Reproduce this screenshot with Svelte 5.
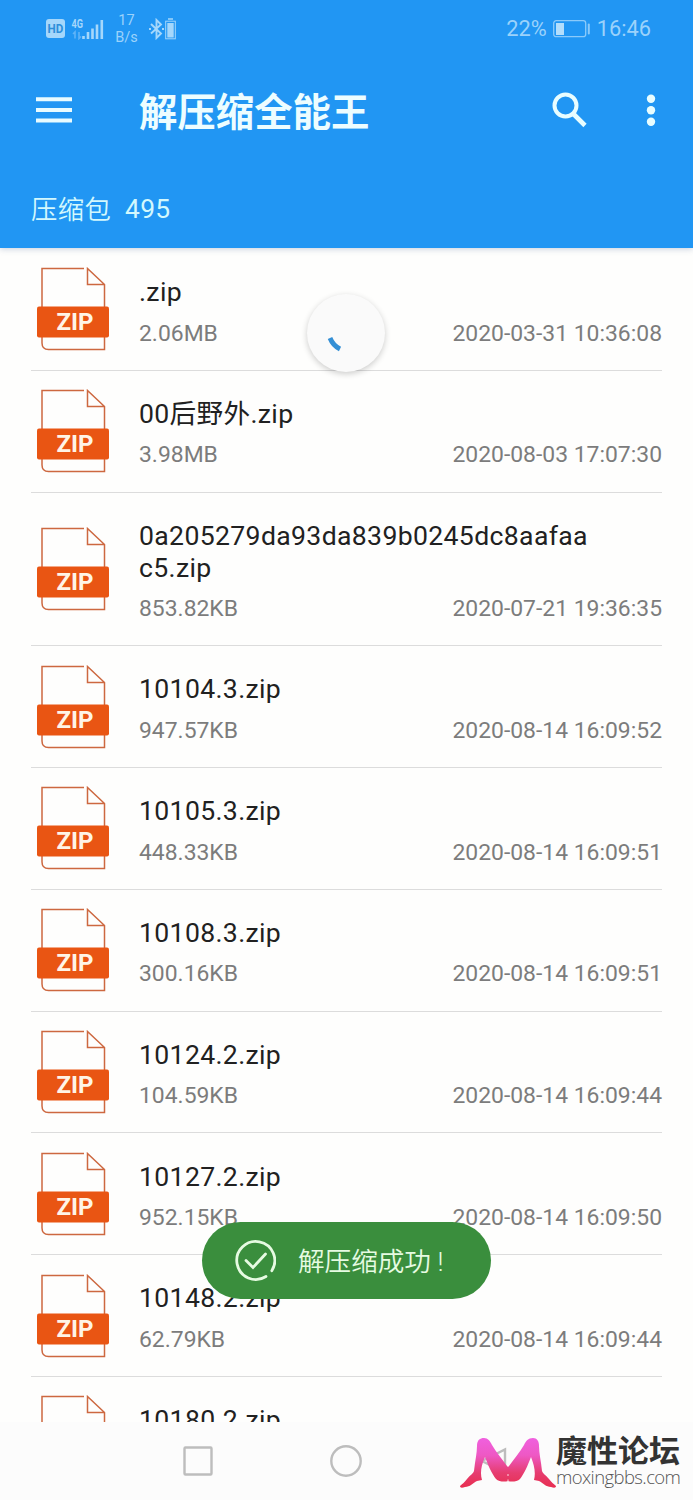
<script lang="ts">
  interface Archive {
    name: string;
    size: string;
    date: string;
  }

  let total = $state(495);

  let archives = $state<Archive[]>([
    { name: ".zip", size: "2.06MB", date: "2020-03-31 10:36:08" },
    { name: "00后野外.zip", size: "3.98MB", date: "2020-08-03 17:07:30" },
    { name: "0a205279da93da839b0245dc8aafaac5.zip", size: "853.82KB", date: "2020-07-21 19:36:35" },
    { name: "10104.3.zip", size: "947.57KB", date: "2020-08-14 16:09:52" },
    { name: "10105.3.zip", size: "448.33KB", date: "2020-08-14 16:09:51" },
    { name: "10108.3.zip", size: "300.16KB", date: "2020-08-14 16:09:51" },
    { name: "10124.2.zip", size: "104.59KB", date: "2020-08-14 16:09:44" },
    { name: "10127.2.zip", size: "952.15KB", date: "2020-08-14 16:09:50" },
    { name: "10148.2.zip", size: "62.79KB", date: "2020-08-14 16:09:44" },
    { name: "10180.2.zip", size: "", date: "" },
  ]);
</script>

{#snippet zipIcon()}
  <svg class="zip-icon" width="72" height="84" viewBox="0 0 72 84">
    <path
      d="M47 1.500H5V76Q5 82.500 11.500 82.500H67.500V17.500L50.500 1.500V17.500H67.500"
      fill="none"
      stroke="#cd6840"
      stroke-width="1.500"
    />
    <rect x="0" y="39.500" width="72" height="31" rx="2" fill="#e95513" />
    <text x="19.500" y="63" textLength="37" lengthAdjust="spacingAndGlyphs">ZIP</text>
  </svg>
{/snippet}

<div class="screen">
  <header>
    <div class="status-bar">
      <svg class="hd" width="19" height="19" viewBox="0 0 19 19">
        <rect width="19" height="19" rx="3" fill="#a5d7fb" />
        <text x="1.600" y="14.300" textLength="15.800" lengthAdjust="spacingAndGlyphs">HD</text>
      </svg>
      <svg class="signal" width="34" height="24" viewBox="0 0 34 24">
        <text x="0.500" y="11.500" textLength="11.500" lengthAdjust="spacingAndGlyphs">4G</text>
        <path d="M4 22.500V16L2 18M8 16V22.500L10 20.500" fill="none" stroke="#5fb3f8" stroke-width="1.600" />
        <path d="M12.500 20v3M17 16v7M21.500 12.500v10.500M26 8.500v14.500M30.800 4v19" stroke="#a5d7fb" stroke-width="2.600" />
      </svg>
      <div class="speed"><span>17</span><span>B/s</span></div>
      <svg class="bluetooth" width="28" height="22" viewBox="0 0 28 22">
        <path d="M2 6L12 15.500L7.500 20V2L12 6.500L2 15.500M0 11h2M13 11h2" fill="none" stroke="#a5d7fb" stroke-width="1.900" />
        <path d="M19 1h5" stroke="#a5d7fb" stroke-width="1.500" />
        <rect x="16.700" y="3.200" width="9.600" height="17.600" fill="none" stroke="#a5d7fb" />
        <rect x="18.300" y="5" width="6.400" height="14.500" fill="#a5d7fb" />
      </svg>
      <div class="spacer"></div>
      <span class="status-text">22%</span>
      <svg class="battery" width="38" height="18" viewBox="0 0 38 18">
        <rect x="0.700" y="0.700" width="32" height="16" rx="2.500" fill="none" stroke="#8bcafa" stroke-width="1.300" />
        <rect x="3" y="3" width="8" height="12" fill="#b3defc" />
        <rect x="34.800" y="3.500" width="2" height="11" rx="1" fill="#8bcafa" />
      </svg>
      <span class="status-text">16:46</span>
    </div>
    <div class="toolbar">
      <svg width="36" height="26" viewBox="0 0 36 26">
        <path d="M0 2.200h36M0 12.900h36M0 23.500h36" stroke="#e8fbff" stroke-width="4" />
      </svg>
      <h1>解压缩全能王</h1>
      <svg width="36" height="36" viewBox="0 0 36 36">
        <circle cx="13.500" cy="13.500" r="11" fill="none" stroke="#e8fdff" stroke-width="4" />
        <path d="M21.500 22L33 33.500" stroke="#e8fdff" stroke-width="4.600" />
      </svg>
      <svg class="more" width="10" height="34" viewBox="0 0 10 34">
        <g fill="#e8fdff">
          <circle cx="5" cy="5.700" r="4.200" />
          <circle cx="5" cy="17.200" r="4.200" />
          <circle cx="5" cy="28.700" r="4.200" />
        </g>
      </svg>
    </div>
    <div class="summary"><span class="label">压缩包</span><span>{total}</span></div>
  </header>

  <main>
    {#each archives as archive}
      <div class="row">
        {@render zipIcon()}
        <div class="info">
          <div class="name">{archive.name}</div>
          <div class="meta"><span>{archive.size}</span><span>{archive.date}</span></div>
        </div>
      </div>
    {/each}
  </main>

  <nav>
    <svg width="30" height="30" viewBox="0 0 30 30">
      <rect x="1.500" y="1.500" width="27" height="27" rx="1" />
    </svg>
    <svg width="32" height="32" viewBox="0 0 32 32">
      <circle cx="16" cy="16" r="14.700" />
    </svg>
    <svg width="30" height="30" viewBox="0 0 30 30">
      <path d="M26 3.500V26.500L3 15Z" />
    </svg>
  </nav>

  <div class="spinner">
    <svg width="78" height="78" viewBox="0 0 78 78">
      <path d="M23 44Q26 51.500 33 55" fill="none" stroke="#348fd5" stroke-width="4.800" />
    </svg>
  </div>

  <div class="toast">
    <svg width="42" height="42" viewBox="0 0 42 42">
      <path
        d="M37.800 30.700A19 19 0 1 0 32 36.500M12 20.500L19 27.500L31.500 14"
        fill="none"
        stroke="#e6fbe2"
        stroke-width="2.800"
        stroke-linecap="round"
      />
    </svg>
    <span>解压缩成功 !</span>
  </div>

  <div class="watermark">
    <svg width="98" height="54" viewBox="0 0 98 54">
      <defs>
        <linearGradient id="legs" x1="0" y1="0" x2="0" y2="1">
          <stop offset="0" stop-color="#f060df" />
          <stop offset="0.350" stop-color="#ee58c4" />
          <stop offset="0.700" stop-color="#e63d70" />
          <stop offset="1" stop-color="#e82e50" />
        </linearGradient>
      </defs>
      <path
        fill="url(#legs)"
        d="M17 9C17 3 20 1 24 1C28 1 30 4 32 8C36 15 42 22 47 29L48 30L49 29C54 22 60 15 64 8C66 4 68 1 73 1C77 1 79 4 79 9C79 16 81 24 82 34C83 37 86 38 89 42C91 45 94 47 96 49C96 51 94 51 91 50C86 50 83 46 79 44L74 43C76 35 74 28 71 20C68 28 64 37 60 42C57 45 51 45 48 44C45 45 39 45 36 42C32 37 28 28 25 20C21 29 20 36 22 43L17 44C13 46 10 50 5 50C2 51 0 51 0 49C2 47 5 45 7 42C10 38 13 37 14 34C15 24 17 16 17 9Z"
      />
      <path d="M47 38h2M48 42.500v2" stroke="#fbd5df" />
    </svg>
    <div class="brand">
      <strong>魔性论坛</strong>
      <span>moxingbbs.com</span>
    </div>
  </div>
</div>

<style>
  :global(body) {
    margin: 0;
  }

  .screen {
    position: relative;
    display: flex;
    flex-direction: column;
    width: 693px;
    height: 1500px;
    overflow: hidden;
    background: #fefefd;
    font-family: Roboto, "Noto Sans CJK SC", sans-serif;
  }

  svg {
    display: block;
    flex: none;
  }

  header {
    flex: none;
    height: 248px;
    background: #2196f3;
    box-shadow: 0 1px 6px rgba(70, 100, 150, 0.3);
    z-index: 1;
  }

  .status-bar {
    display: flex;
    align-items: center;
    height: 57px;
    padding: 0 42px 0 46px;
    color: #9bd2fb;
  }

  .hd text {
    fill: #2d8fda;
    font-size: 13px;
    font-weight: 700;
  }

  .signal {
    margin: -2px 0 0 6px;
  }

  .signal text {
    fill: #a5d7fb;
    font-size: 13px;
    font-weight: 700;
  }

  .speed {
    display: flex;
    flex-direction: column;
    align-items: center;
    width: 24px;
    margin-left: 9.5px;
    font-size: 14.5px;
    line-height: 17px;
  }

  .bluetooth {
    margin-left: 10.5px;
  }

  .spacer {
    flex: 1;
  }

  .status-text {
    font-size: 21.8px;
    line-height: 30px;
  }

  .battery {
    margin: 0 6px;
  }

  .toolbar {
    display: flex;
    align-items: center;
    height: 106px;
    padding: 0 37px 0 36px;
  }

  h1 {
    flex: 1;
    margin: 5px 0 0 67px;
    color: #edfdff;
    font-size: 38.4px;
    font-weight: 700;
    line-height: 50px;
  }

  .more {
    margin-left: 58px;
  }

  .summary {
    display: flex;
    align-items: center;
    gap: 14px;
    height: 91px;
    padding-left: 31px;
    color: #d3f8fd;
    font-size: 26.4px;
    letter-spacing: 0.3px;
  }

  .summary .label {
    margin-top: -3px;
    font-weight: 350;
  }

  main {
    flex: 1;
    min-height: 0;
    overflow: hidden;
    padding: 1px 31px 0;
  }

  .row {
    display: flex;
    align-items: center;
    box-sizing: border-box;
    min-height: 121.8px;
    padding: 0 0 0 6px;
    border-bottom: 1px solid #dcdcdc;
  }

  .zip-icon text {
    fill: #fff4e6;
    font-size: 23px;
    font-weight: 700;
  }

  .info {
    flex: 1;
    min-width: 0;
    padding: 27.2px 0 24.2px 30px;
  }

  .name {
    width: 458px;
    color: #212121;
    font-size: 26.6px;
    letter-spacing: 0.35px;
    line-height: 31.8px;
    word-break: break-all;
  }

  .meta {
    display: flex;
    justify-content: space-between;
    height: 27px;
    margin-top: 10.6px;
    color: #7c7c7c;
    font-size: 22.9px;
    line-height: 29px;
  }

  nav {
    display: flex;
    flex: none;
    align-items: center;
    justify-content: center;
    gap: 117px;
    height: 78px;
    padding-right: 1px;
    background: #fcfcfc;
  }

  nav svg {
    fill: none;
    stroke: #bdbdbd;
    stroke-width: 2.4;
  }

  .spinner {
    position: absolute;
    top: 294px;
    left: 307px;
    width: 78px;
    height: 78px;
    border-radius: 50%;
    background: #fafafa;
    box-shadow: 0 2px 6px rgba(0, 0, 0, 0.2);
  }

  .toast {
    position: absolute;
    top: 1222px;
    left: 202px;
    display: flex;
    align-items: center;
    box-sizing: border-box;
    width: 289px;
    height: 77px;
    padding-left: 32px;
    border-radius: 39px;
    background: #3a8e3d;
    color: #e6fbe2;
    font-size: 26.6px;
    font-weight: 350;
  }

  .toast span {
    margin: -2px 0 0 22px;
    white-space: nowrap;
  }

  .watermark {
    position: absolute;
    top: 1437px;
    left: 460px;
    display: flex;
  }

  .brand {
    display: flex;
    flex-direction: column;
    margin: 0 0 0 -2px;
    color: #333;
  }

  .brand strong {
    font-size: 31px;
    line-height: 30px;
  }

  .brand span {
    color: #555;
    font-family: "Open Sans", sans-serif;
    font-size: 18.5px;
    font-weight: 300;
    letter-spacing: -0.6px;
    line-height: 20px;
  }
</style>
